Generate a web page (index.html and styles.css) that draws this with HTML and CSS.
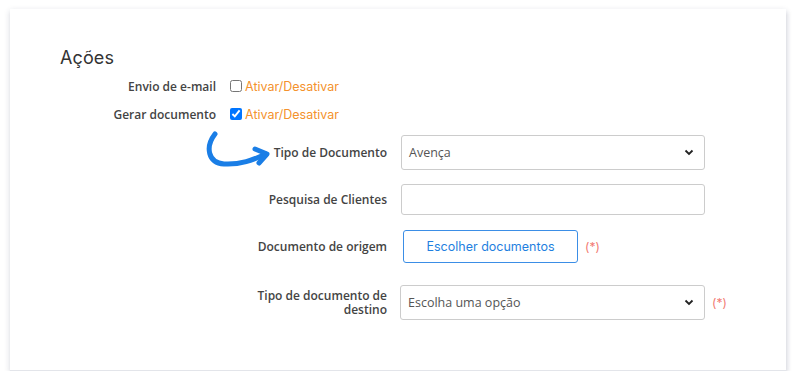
FILE: index.html
```html
<!DOCTYPE html>
<html lang="pt">
<head>
<meta charset="utf-8">
<link rel="stylesheet" href="styles.css">
</head>
<body>
<div class="card">
  <h2 class="title">Ações</h2>
  <div class="toggles">
    <div class="trow">
      <span class="tlabel">Envio de e-mail</span>
      <label class="check"><input type="checkbox"><span>Ativar/Desativar</span></label>
    </div>
    <div class="trow">
      <span class="tlabel">Gerar documento</span>
      <label class="check"><input type="checkbox" checked><span>Ativar/Desativar</span></label>
    </div>
  </div>
  <div class="form">
    <div class="frow r1">
      <svg class="arrow" width="70" height="45" viewBox="0 0 70 45">
        <path d="M12 4 C2 17 5 33 21 34 C37 35 50 30 63 24" fill="none" stroke="#1a7ee6" stroke-width="5" stroke-linecap="round"/>
        <path d="M52 19 L64 24 L56 33" fill="none" stroke="#1a7ee6" stroke-width="5" stroke-linecap="round" stroke-linejoin="round"/>
      </svg>
      <span class="flabel">Tipo de Documento</span>
      <div class="sel sel35">
        <span class="seltext">Avença</span>
        <svg class="chev" width="10" height="7" viewBox="0 0 10 7"><path d="M1.5 1.5 L5 5 L8.5 1.5" fill="none" stroke="#222" stroke-width="1.8"/></svg>
      </div>
    </div>
    <div class="frow r2">
      <span class="flabel">Pesquisa de Clientes</span>
      <div class="inp"></div>
    </div>
    <div class="frow r3">
      <span class="flabel">Documento de origem</span>
      <button class="btn">Escolher documentos</button>
      <span class="req">(*)</span>
    </div>
    <div class="frow r4">
      <span class="flabel">Tipo de documento de destino</span>
      <div class="sel sel35 s4">
        <span class="seltext">Escolha uma opção</span>
        <svg class="chev" width="10" height="7" viewBox="0 0 10 7"><path d="M1.5 1.5 L5 5 L8.5 1.5" fill="none" stroke="#222" stroke-width="1.8"/></svg>
      </div>
      <span class="req">(*)</span>
    </div>
  </div>
</div>
</body>
</html>
```

FILE: styles.css
```css
* { box-sizing: border-box; }
body {
  margin: 0;
  background: #fff;
  font-family: "Open Sans", "Noto Sans", sans-serif;
  color: #333;
}
.card {
  margin: 9px 0 0 10px;
  width: 776px;
  height: 362px;
  background: #fff;
  border-bottom: 1px solid #e3e5ea;
  box-shadow: 0 2px 6px rgba(30, 40, 80, 0.18), 2px 3px 4px rgba(30, 40, 80, 0.06);
  padding: 37px 0 0 50px;
}
.title {
  margin: 0;
  font-family: Inter, "Open Sans", sans-serif;
  font-weight: 400;
  font-size: 18px;
  line-height: 24px;
  color: #333;
  letter-spacing: 0.1px;
}
.toggles {
  margin-top: 2px;
  display: flex;
  flex-direction: column;
}
.trow {
  display: flex;
  align-items: center;
  height: 28px;
}
.tlabel {
  width: 156px;
  text-align: right;
  font-size: 12px;
  font-weight: 600;
  color: #444;
  margin-right: 14px;
}
.check {
  display: flex;
  align-items: center;
}
.check input {
  margin: 0 3px 0 0;
  width: 12px;
  height: 12px;
}
.check span {
  font-family: Inter, "Open Sans", sans-serif;
  font-size: 12.5px;
  color: #f4922d;
}
.form {
  margin-top: 7px;
  display: flex;
  flex-direction: column;
}
.frow {
  position: relative;
  display: flex;
  align-items: center;
}
.r2 { margin-top: 14px; }
.r3 { margin-top: 15px; }
.r4 { margin-top: 22px; }
.flabel {
  width: 327px;
  text-align: right;
  font-size: 12px;
  font-weight: 600;
  color: #444;
  margin-right: 14px;
  line-height: 14px;
}
.r4 .flabel { padding-left: 190px; }
.sel {
  width: 304px;
  border: 1px solid #ccc;
  border-radius: 3px;
  display: flex;
  align-items: center;
  justify-content: space-between;
  padding: 0 10px 0 7px;
  background: #fff;
}
.sel35 { height: 35px; }
.s4 { margin-left: -1px; width: 305px; }
.seltext {
  font-size: 12.5px;
  color: #555;
}
.inp {
  width: 304px;
  height: 31px;
  border: 1px solid #ccc;
  border-radius: 3px;
}
.btn {
  margin-left: 2px;
  width: 175px;
  height: 33px;
  border: 1px solid #3b8ee6;
  border-radius: 3px;
  background: #fff;
  color: #1f7fe0;
  font-family: Inter, "Open Sans", sans-serif;
  font-size: 12.5px;
}
.req {
  margin-left: 7px;
  font-family: Inter, sans-serif;
  font-size: 12px;
  color: #f27a72;
}
.arrow {
  position: absolute;
  left: 143px;
  top: -5px;
}
```
